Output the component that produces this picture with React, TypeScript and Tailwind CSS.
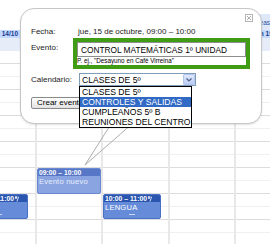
import React from "react";

const rows = Array.from({ length: 15 }, (_, i) => i);

const Column = ({ width, first, children }: { width: string; first?: boolean; children?: React.ReactNode }) => (
  <div className={`relative ${width} shrink-0 ${first ? "" : "border-l-2 border-[#e8e8e8]"}`}>
    {rows.map((i) => (
      <div
        key={i}
        className={i % 2 === 0 ? "h-[13px] border-b border-[#dcdcdc]" : "h-[13px] border-b border-[#f0f0f0]"}
      />
    ))}
    {children}
  </div>
);

const RepeatIcon = () => (
  <svg width="4" height="6" viewBox="0 0 4 6" className="shrink-0">
    <path d="M0.5 0.5h1v2h-1zM2.5 1l1 0-1.5 4.5" stroke="white" strokeWidth="0.8" fill="none" />
  </svg>
);

const App = () => {
  return (
    <div className="relative w-[270px] h-[244px] overflow-hidden bg-white font-['Liberation_Sans',Arial,sans-serif]">
      {/* top bar */}
      <div className="flex h-[30px] justify-end items-end">
        <div className="flex justify-end w-[40px] h-[16px] pt-[5px] bg-[#dfe8f8] text-[6.5px] leading-[7px] text-[#2a4fa0] overflow-hidden">
          Tareas
        </div>
      </div>

      {/* day header (middle days sit under the bubble) */}
      <div className="flex h-[8px] bg-[#c3d9ff] text-[6.5px] leading-[8px] font-bold text-[#1a3a8a] whitespace-nowrap">
        <div className="flex justify-end w-[35px] pr-[17px] overflow-hidden">mié 14/10</div>
        <div className="w-[199px]" />
        <div className="w-[36px] pl-[20px] overflow-hidden">lun 19/10</div>
      </div>
      <div className="h-[13px] bg-[#e6edf8]" />

      {/* week grid */}
      <div className="flex">
        <Column width="w-[35px]" first>
          <div className="absolute top-[143px] right-[7px] w-[58px] h-[25px] rounded-[2px] border border-[#4a6fc6] bg-[#668cd9] overflow-hidden">
            <div className="flex items-center gap-[1px] h-[7px] bg-[#2b56b0] pl-[1px] text-[6.8px] leading-[7px] font-bold text-white whitespace-nowrap">
              10:00 – 11:00
              <RepeatIcon />
            </div>
            <div className="mx-auto mt-[12px] w-[6px] h-[1px] bg-[#c9d7f5]" />
          </div>
        </Column>
        <Column width="w-[66px]">
          <div className="absolute top-[117px] left-0 w-[64px] h-[26px] rounded-[2px] border border-[#6b89d3] bg-[#8aa4e2] overflow-hidden">
            <div className="h-[7px] bg-[#5876c6] pl-[1px] text-[6.8px] leading-[7px] font-bold text-white whitespace-nowrap">
              09:00 – 10:00
            </div>
            <div className="pl-[1px] pt-[1px] text-[7.6px] leading-[9px] text-[#e8eefc] tracking-[0.2px]">Evento nuevo</div>
          </div>
        </Column>
        <Column width="w-[67px]">
          <div className="absolute top-[143px] left-0 w-[58px] h-[25px] rounded-[2px] border border-[#4a6fc6] bg-[#668cd9] overflow-hidden">
            <div className="flex items-center gap-[1px] h-[7px] bg-[#2b56b0] pl-[1px] text-[6.8px] leading-[7px] font-bold text-white whitespace-nowrap">
              10:00 – 11:00
              <RepeatIcon />
            </div>
            <div className="pl-[1px] pt-[1px] text-[7.6px] leading-[9px] text-white tracking-[0.2px]">LENGUA</div>
            <div className="mx-auto mt-[2px] w-[6px] h-[1px] bg-[#c9d7f5]" />
          </div>
        </Column>
        <Column width="w-[66px]" />
        <Column width="w-[36px]" />
      </div>

      {/* event bubble */}
      <div className="absolute left-[20px] top-[8px] w-[242px] h-[116px] rounded-[14px] border border-[#c6c6c6] bg-white shadow-[0_1px_2px_rgba(0,0,0,0.12)] pl-[10px] pt-[16px] text-[8px] leading-[10px] text-[#222]">
        <div className="absolute right-[8px] top-[5px] flex items-center justify-center w-[8px] h-[8px] border border-[#b4b4b4] bg-white">
          <svg width="4" height="4" viewBox="0 0 4 4">
            <path d="M0 0L4 4M4 0L0 4" stroke="#9a9a9a" strokeWidth="0.8" />
          </svg>
        </div>

        <div className="flex items-center h-[13px]">
          <span className="w-[47px]">Fecha:</span>
          <span>jue, 15 de octubre, 09:00 – 10:00</span>
        </div>

        <div className="flex">
          <span className="w-[42px] pt-[5px]">Evento:</span>
          <div className="w-[177px] h-[31px] border-4 border-[#3f9c14] bg-white">
            <div className="flex items-center h-[15px] border border-[#8e8e8e] pl-[3px] text-[8.3px] text-black whitespace-nowrap">
              CONTROL MATEMÁTICAS 1º UNIDAD
            </div>
            <div className="text-[6.3px] leading-[8px] text-black whitespace-nowrap">P. ej., "Desayuno en Café Virreina"</div>
          </div>
        </div>

        <div className="flex items-center mt-[4px] h-[13px]">
          <span className="w-[48px]">Calendario:</span>
          <div className="flex items-center justify-between w-[117px] h-[13px] border border-[#7f9db9] bg-white pl-[2px] text-[8.6px] text-black">
            <span>CLASES DE 5º</span>
            <div className="flex items-center justify-center w-[12px] h-[11px] border border-[#b3c6ee] rounded-[1px] bg-gradient-to-b from-[#dfe8fb] to-[#bccdf4]">
              <svg width="6" height="4" viewBox="0 0 6 4">
                <path d="M0.5 0.5L3 3L5.5 0.5" stroke="#4d6185" strokeWidth="1.2" fill="none" />
              </svg>
            </div>
          </div>
        </div>

        <div className="mt-[11px]">
          <div className="inline-flex items-center h-[12px] px-[5px] border border-[#8a8a8a] rounded-[2px] bg-gradient-to-b from-white to-[#e2e2e2] text-[8px] text-black whitespace-nowrap">
            Crear evento
          </div>
        </div>

        {/* bubble tail */}
        <svg className="absolute left-0 top-0 overflow-visible pointer-events-none" width="242" height="160">
          <path d="M90 115L64 156L112 114" stroke="#adadad" strokeWidth="1" fill="none" />
        </svg>

        {/* open calendar list */}
        <div className="absolute left-[58px] top-[77px] w-[113px] border border-black bg-white text-[8.6px] leading-[10px] text-black whitespace-nowrap">
          <div className="h-[10px] pl-[2px]">CLASES DE 5º</div>
          <div className="h-[10px] pl-[2px] bg-[#316ac5] text-white">CONTROLES Y SALIDAS</div>
          <div className="h-[10px] pl-[2px]">CUMPLEAÑOS 5º B</div>
          <div className="h-[10px] pl-[2px]">REUNIONES DEL CENTRO</div>
        </div>
      </div>
    </div>
  );
};

export default App;
